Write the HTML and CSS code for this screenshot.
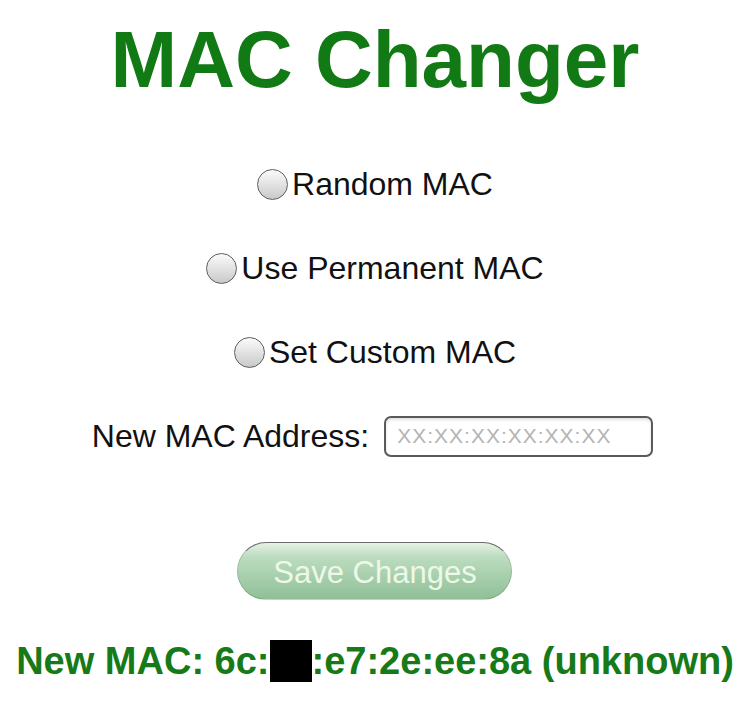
FILE: index.html
```html
<!DOCTYPE html>
<html lang="en">
<head>
    <meta charset="UTF-8">
    <meta name="viewport" content="width=device-width, initial-scale=1.0">
    <title>MAC Changer</title>
    <link rel="stylesheet" href="styles.css">
</head>
<body>
    <div class="container">
        <h1>MAC Changer</h1>
        <form id="macForm" class="mac-form">
            <div class="option-row">
                <label class="option"><input type="radio" name="mode" value="random">Random MAC</label>
            </div>
            <div class="option-row">
                <label class="option"><input type="radio" name="mode" value="permanent">Use Permanent MAC</label>
            </div>
            <div class="option-row">
                <label class="option"><input type="radio" name="mode" value="custom">Set Custom MAC</label>
            </div>
            <div class="option-row address-row">
                <label for="newMac" class="field-label">New MAC Address:</label>
                <input type="text" id="newMac" name="newMac" placeholder="XX:XX:XX:XX:XX:XX">
            </div>
            <button type="submit" class="save-btn">Save Changes</button>
        </form>
        <div class="status">New MAC: 6c:<span class="redacted"></span>:e7:2e:ee:8a (unknown)</div>
    </div>
</body>
</html>
```

FILE: styles.css
```css
body {
    margin: 0;
    font-family: "Liberation Sans", Arial, sans-serif;
    background-color: white;
    color: #111;
}
.container {
    display: flex;
    flex-direction: column;
    align-items: center;
}
h1 {
    margin: 20px 0 0;
    font-size: 80px;
    line-height: 80px;
    font-weight: bold;
    color: #127a14;
}
.mac-form {
    display: flex;
    flex-direction: column;
    align-items: center;
    margin-top: 42px;
}
.option-row {
    height: 84px;
    display: flex;
    align-items: center;
    justify-content: center;
    gap: 15px;
}
.address-row {
    margin-right: 5px;
}
.option {
    display: flex;
    align-items: center;
    gap: 4px;
    font-size: 32px;
}
input[type="radio"] {
    appearance: none;
    -webkit-appearance: none;
    width: 31px;
    height: 31px;
    margin: 0;
    border: 1.5px solid #5e5e5e;
    border-radius: 50%;
    background: linear-gradient(to bottom, #fbfbfb, #c9c9c9);
}
.field-label {
    font-size: 32px;
}
input[type="text"] {
    box-sizing: border-box;
    width: 269px;
    height: 41px;
    padding: 0 11px;
    border: 2px solid #5a5a5a;
    border-radius: 7px;
    font-family: "Liberation Sans", Arial, sans-serif;
    font-size: 21px;
    letter-spacing: 1px;
    box-shadow: inset 0 2px 3px rgba(0,0,0,0.12);
}
input[type="text"]::placeholder {
    color: #b4b4b4;
}
.save-btn {
    margin-top: 64px;
    width: 275px;
    height: 58px;
    padding-top: 4px;
    border: 1px solid rgba(0,0,0,0.12);
    border-top-color: #6b6b6b;
    border-radius: 29px;
    background: linear-gradient(to bottom, #e6f2e6 0%, #bcdcbf 25%, #8fc097 100%);
    color: #edf8e8;
    font-family: "Liberation Sans", Arial, sans-serif;
    font-size: 31px;
}
.status {
    margin-top: 40px;
    font-size: 38px;
    line-height: 42px;
    font-weight: bold;
    color: #157a17;
}
.redacted {
    display: inline-block;
    width: 42px;
    height: 42px;
    background-color: black;
    vertical-align: top;
}
```
